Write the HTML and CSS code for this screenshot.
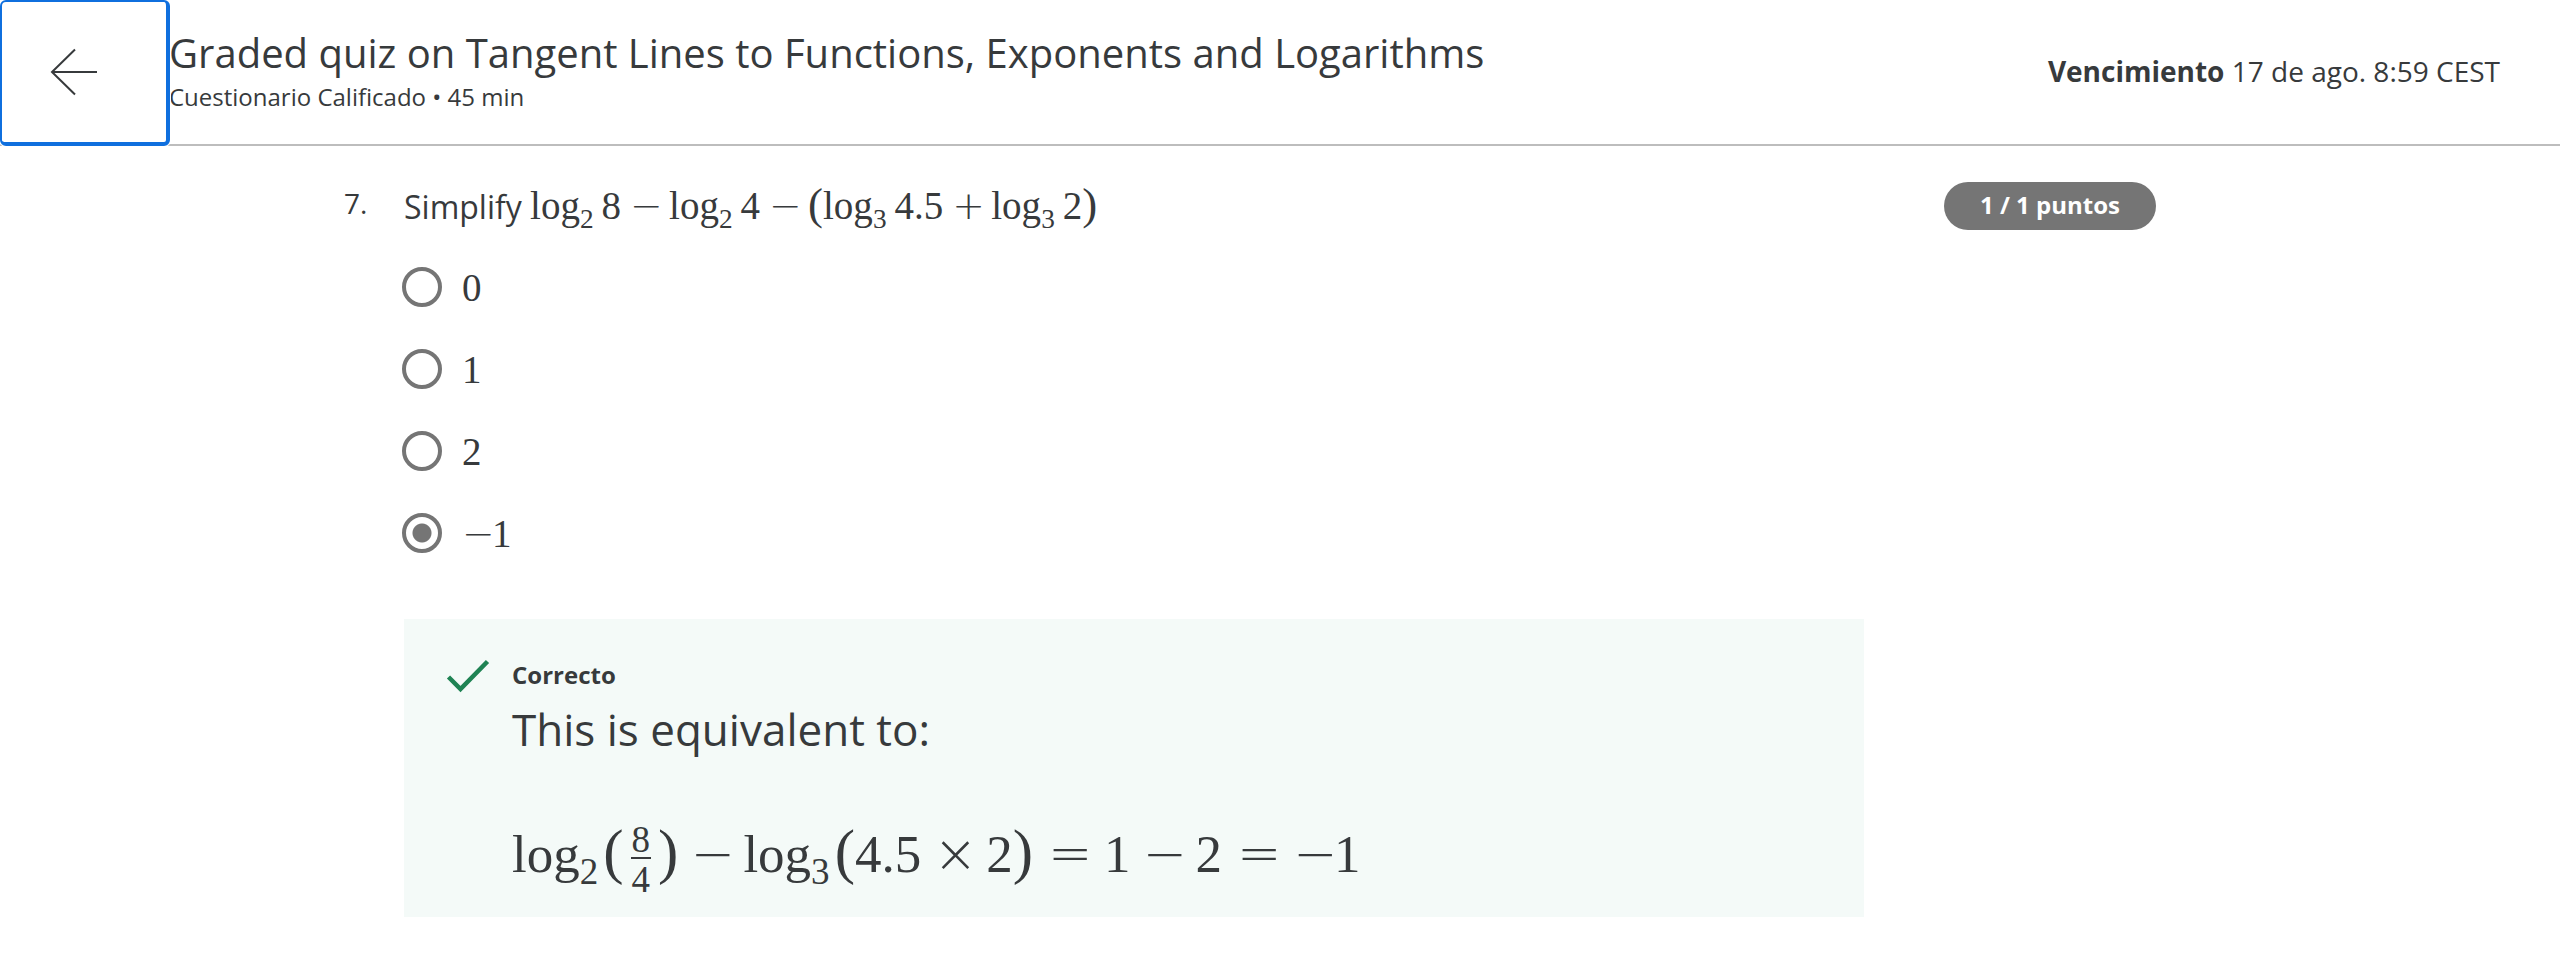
FILE: index.html
```html
<!DOCTYPE html>
<html lang="es">
<head>
<meta charset="utf-8">
<meta name="viewport" content="width=device-width, initial-scale=1">
<title>Graded quiz</title>
<link rel="stylesheet" href="styles.css">
</head>
<body>
<header class="topbar">
  <button class="back" type="button" aria-label="Volver">
    <svg class="back-icon" viewBox="0 0 48 48" fill="none" stroke="currentColor" stroke-width="2" aria-hidden="true"><path d="M47 24H2M25 1.500L2 24l23 22.500"/></svg>
  </button>
  <div class="heading">
    <h1 class="title">Graded quiz on Tangent Lines to Functions, Exponents and Logarithms</h1>
    <p class="subtitle">Cuestionario Calificado • 45 min</p>
  </div>
  <p class="due"><strong>Vencimiento</strong> 17 de ago. 8:59 CEST</p>
</header>
<main class="question">
  <div class="number">7.</div>
  <div class="body">
    <h2 class="prompt" id="prompt">Simplify <span class="math"><span>log</span><span class="sub">2</span><span class="arg">8</span><span class="op">−</span><span>log</span><span class="sub">2</span><span class="arg">4</span><span class="op">−</span><span class="paren">(</span><span>log</span><span class="sub">3</span><span class="arg">4.5</span><span class="op">+</span><span>log</span><span class="sub">3</span><span class="arg">2</span><span class="paren">)</span></span></h2>
    <div class="options" role="radiogroup" aria-labelledby="prompt">
      <label class="option"><input class="radio" type="radio" name="answer"><span class="math">0</span></label>
      <label class="option"><input class="radio" type="radio" name="answer"><span class="math">1</span></label>
      <label class="option"><input class="radio" type="radio" name="answer"><span class="math">2</span></label>
      <label class="option"><input class="radio" type="radio" name="answer" checked><span class="math"><span class="sign">−</span>1</span></label>
    </div>
    <section class="feedback">
      <svg class="check" viewBox="0 0 44 34" fill="none" stroke="currentColor" stroke-width="4.500" aria-hidden="true"><path d="M2.500 18L14.500 30L41.500 2.500"/></svg>
      <div>
        <h3 class="verdict">Correcto</h3>
        <p class="explain">This is equivalent to:</p>
        <p class="math formula"><span>log</span><span class="sub">2</span><span class="paren">(</span><span class="frac"><span class="num">8</span><span class="den">4</span></span><span class="paren">)</span><span class="op">−</span><span>log</span><span class="sub">3</span><span class="paren">(</span><span>4.5</span><span class="op">×</span><span>2</span><span class="paren">)</span><span class="op rel">=</span><span>1</span><span class="op">−</span><span>2</span><span class="op rel">=</span><span class="sign">−</span><span>1</span></p>
      </div>
    </section>
  </div>
  <div class="points">1 / 1 puntos</div>
</main>
</body>
</html>
```
FILE: styles.css
```css
* { box-sizing: border-box; }
body {
  margin: 0;
  background: #fff;
  color: #373a3c;
  font-family: "Open Sans", "Noto Sans", sans-serif;
}
h1, h2, h3, p { margin: 0; font-weight: 400; }

.topbar {
  display: flex;
  align-items: center;
  border-bottom: 2px solid #bdbdbd;
}
.back {
  position: relative;
  z-index: 1;
  flex: none;
  display: flex;
  align-items: center;
  width: 170px;
  height: 146px;
  margin-bottom: -2px;
  padding: 0 0 0 48px;
  border: 4px solid #0f6fde;
  border-width: 2px 4px 4px 2px;
  border-radius: 6px;
  background: #fff;
  color: #373a3c;
  box-shadow: 0 0 0 1px #fff;
}
.back-icon { width: 48px; height: 48px; }
.heading { flex: 1; margin-left: -1px; padding-bottom: 4px; }
.title { font-size: 40px; line-height: 54px; }
.subtitle { font-size: 24px; line-height: 34px; }
.due { font-size: 28px; line-height: 40px; padding: 0 60px 2px 0; }
.due strong { font-weight: 700; }

.question {
  display: grid;
  grid-template-columns: 60px 1fr auto;
  align-items: start;
  max-width: 1872px;
  margin: 0 auto;
  padding: 36px 60px 60px 0;
}
.number { font-size: 28px; line-height: 42px; }
.prompt { font-size: 32px; line-height: 48px; }
.points {
  width: 212px;
  margin-left: 80px;
  border-radius: 24px;
  padding-bottom: 2px;
  background: #757575;
  color: #fff;
  font-size: 24px;
  font-weight: 700;
  line-height: 46px;
  text-align: center;
}

.math {
  font-family: "Liberation Serif", serif;
  font-size: 39px;
  white-space: nowrap;
}
.sub {
  display: inline-block;
  font-size: 0.7em;
  line-height: 0;
  transform: translateY(0.32em);
  padding-right: 2px;
}
.arg { padding-left: 6px; }
.op, .sign {
  display: inline-block;
  width: 30px;
  text-align: center;
  font-family: "DejaVu Sans", sans-serif;
  font-weight: 200;
  line-height: 1;
}
.op { margin: 0 9px; }
.paren {
  display: inline-block;
  font-size: 1.15em;
  line-height: 0;
}

.options { display: grid; gap: 34px; margin: 32px 0 62px; }
.option {
  display: flex;
  align-items: center;
  gap: 20px;
  height: 48px;
  margin-left: -2px;
}
.radio {
  appearance: none;
  flex: none;
  width: 40px;
  height: 40px;
  margin: 0;
  border: 4px solid #757575;
  border-radius: 50%;
  background: #fff;
}
.radio:checked { background: radial-gradient(circle, #757575 9px, #fff 10px); }

.feedback {
  display: flex;
  gap: 22px;
  padding: 40px 42px 18px;
  background: #f4faf8;
}
.check { flex: none; width: 44px; height: 34px; color: #1f8354; }
.verdict { font-size: 24px; font-weight: 700; line-height: 32px; margin-bottom: 2px; }
.explain { font-size: 44px; line-height: 72px; }
.formula { font-size: 53px; line-height: 90px; margin-top: 44px; }
.formula .op, .formula .sign { width: 41px; }
.formula .op { margin: 0 12px; }
.formula .rel { margin: 0 15px; }
.formula .sub { padding-right: 5px; }
.frac {
  display: inline-flex;
  flex-direction: column;
  vertical-align: middle;
  margin: 0 7px;
  font-size: 37px;
  line-height: 34px;
}
.num { border-bottom: 2px solid currentColor; padding: 0 1px; }
.den { padding: 4px 1px 0; }
```
